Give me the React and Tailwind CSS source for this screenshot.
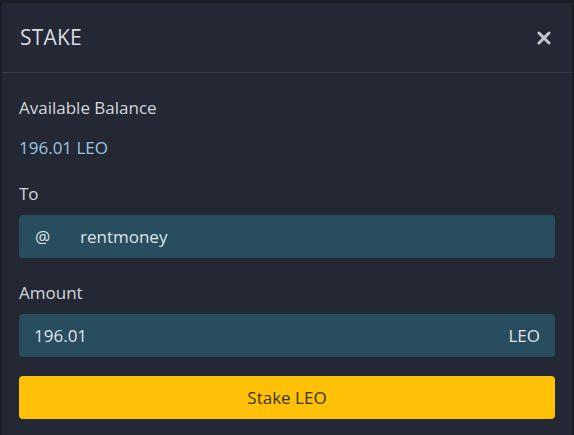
export default function App() {
  return (
    <div className="w-[574px] h-[435px] bg-[#1b1e26] pt-[3px] pl-[2px] overflow-hidden" style={{ fontFamily: '"Open Sans", "Noto Sans", sans-serif' }}>
      <div className="w-[570px] h-[432px] bg-[#242834] text-[#d3d6dd]">
        <div className="h-[70px] flex items-center justify-between pl-[18px] pr-[20px] border-b border-[#343a47]">
          <div className="text-[21px] tracking-[0.2px] text-[#d7dae0]">STAKE</div>
          <svg width="14" height="14" viewBox="0 0 14 14" className="mr-[1px]">
            <path d="M2 2 L12 12 M12 2 L2 12" stroke="#c3c6cc" strokeWidth="3" strokeLinecap="round" />
          </svg>
        </div>
        <div className="px-[17px] pt-[23px]">
          <div className="text-[17px] leading-[24px]">Available Balance</div>
          <div className="mt-[16px] text-[17px] leading-[24px] text-[#98c6e4]">196.01 LEO</div>
          <div className="mt-[22px] text-[17px] leading-[24px]">To</div>
          <div className="mt-[9px] h-[43px] rounded-[4px] bg-[#284d5f] flex items-center text-[17px] text-[#dfe3e8]">
            <span className="pl-[16px] w-[61px]">@</span>
            <span>rentmoney</span>
          </div>
          <div className="mt-[23px] text-[17px] leading-[24px]">Amount</div>
          <div className="mt-[9px] h-[43px] rounded-[4px] bg-[#284d5f] flex items-center justify-between px-[15px] text-[17px] text-[#dfe3e8]">
            <span>196.01</span>
            <span>LEO</span>
          </div>
          <button className="mt-[19px] w-full h-[43px] rounded-[4px] bg-[#ffc107] text-[17px] text-[#3b3305]">Stake LEO</button>
        </div>
      </div>
    </div>
  );
}
